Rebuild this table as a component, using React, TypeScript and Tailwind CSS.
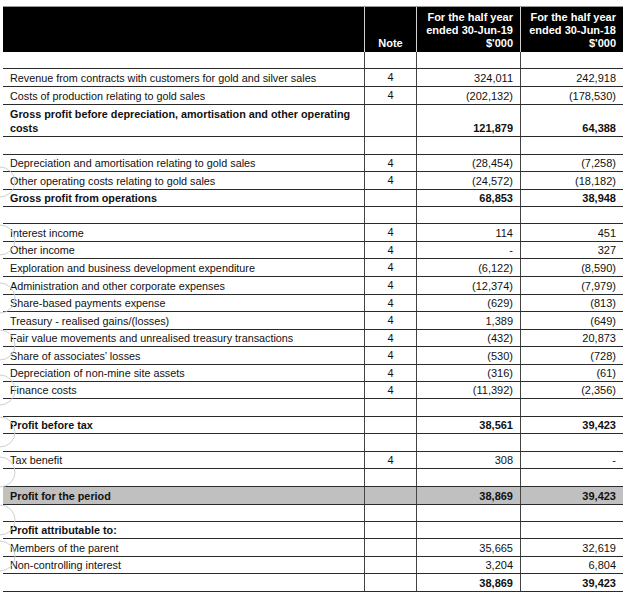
import React from "react";

type Row = {
  label?: string;
  note?: string;
  v1?: string;
  v2?: string;
  bold?: boolean;
  boldValues?: boolean;
  h: number;
  shaded?: boolean;
};

const rows: Row[] = [
  { h: 17 },
  { label: "Revenue from contracts with customers for gold and silver sales", note: "4", v1: "324,011", v2: "242,918", h: 18 },
  { label: "Costs of production relating to gold sales", note: "4", v1: "(202,132)", v2: "(178,530)", h: 18 },
  { label: "Gross profit before depreciation, amortisation and other operating costs", v1: "121,879", v2: "64,388", bold: true, h: 32 },
  { h: 18 },
  { label: "Depreciation and amortisation relating to gold sales", note: "4", v1: "(28,454)", v2: "(7,258)", h: 17 },
  { label: "Other operating costs relating to gold sales", note: "4", v1: "(24,572)", v2: "(18,182)", h: 18 },
  { label: "Gross profit from operations", v1: "68,853", v2: "38,948", bold: true, h: 17 },
  { h: 17 },
  { label: "Interest income", note: "4", v1: "114", v2: "451", h: 18 },
  { label: "Other income", note: "4", v1: "-", v2: "327", h: 17 },
  { label: "Exploration and business development expenditure", note: "4", v1: "(6,122)", v2: "(8,590)", h: 18 },
  { label: "Administration and other corporate expenses", note: "4", v1: "(12,374)", v2: "(7,979)", h: 18 },
  { label: "Share-based payments expense", note: "4", v1: "(629)", v2: "(813)", h: 17 },
  { label: "Treasury - realised gains/(losses)", note: "4", v1: "1,389", v2: "(649)", h: 18 },
  { label: "Fair value movements and unrealised treasury transactions", note: "4", v1: "(432)", v2: "20,873", h: 17 },
  { label: "Share of associates\u2019 losses", note: "4", v1: "(530)", v2: "(728)", h: 18 },
  { label: "Depreciation of non-mine site assets", note: "4", v1: "(316)", v2: "(61)", h: 17 },
  { label: "Finance costs", note: "4", v1: "(11,392)", v2: "(2,356)", h: 17 },
  { h: 18 },
  { label: "Profit before tax", v1: "38,561", v2: "39,423", bold: true, h: 17 },
  { h: 18 },
  { label: "Tax benefit", note: "4", v1: "308", v2: "-", h: 17 },
  { h: 18 },
  { label: "Profit for the period", v1: "38,869", v2: "39,423", bold: true, shaded: true, h: 18 },
  { h: 17 },
  { label: "Profit attributable to:", bold: true, h: 17 },
  { label: "Members of the parent", v1: "35,665", v2: "32,619", h: 18 },
  { label: "Non-controlling interest", v1: "3,204", v2: "6,804", h: 17 },
  { v1: "38,869", v2: "39,423", boldValues: true, h: 18 },
];

const grid = "grid grid-cols-[361px_52px_104px_103px]";

// faint stamp arcs bleeding in from the scan's left margin
function Watermark() {
  const ys = [182, 240, 298, 345, 390, 432, 472, 520, 556];
  return (
    <svg className="pointer-events-none absolute left-0 top-0" width="30" height="598">
      {ys.map((y) => (
        <circle key={y} cx="0" cy={y} r="15" fill="none" stroke="#cfcfcf" strokeWidth="1" />
      ))}
    </svg>
  );
}

export default function App() {
  return (
    <div className="relative h-[598px] w-[640px] overflow-hidden bg-white pl-[3px] pt-[6px] font-['Liberation_Sans',Arial,sans-serif] text-[11px] text-[#111]">
      <div className="w-[620px] border-t border-[#999]">
        {/* header */}
        <div className={`${grid} h-[45px] bg-black font-bold leading-[13px] text-white`}>
          <div />
          <div className="flex items-end justify-center border-l border-[#d0d0d0] pb-[2px]">Note</div>
          <div className="flex flex-col items-end justify-end border-l border-[#d0d0d0] pb-[2px] pr-[7px] text-right">
            <span>For the half year</span>
            <span>ended 30-Jun-19</span>
            <span>$'000</span>
          </div>
          <div className="flex flex-col items-end justify-end border-l border-[#d0d0d0] pb-[2px] pr-[7px] text-right">
            <span>For the half year</span>
            <span>ended 30-Jun-18</span>
            <span>$'000</span>
          </div>
        </div>

        {rows.map((r, i) => {
          const rowBold = r.bold ? "font-bold" : "";
          const valBold = r.bold || r.boldValues ? "font-bold" : "";
          return (
            <div
              key={i}
              className={`${grid} border-b border-[#2b2b2b] leading-[14px] ${r.shaded ? "bg-[#c0c0c0]" : ""}`}
              style={{ height: r.h }}
            >
              <div className={`flex items-center pl-[7px] text-[10.8px] ${rowBold}`}>
                <span className={r.h > 20 ? "w-[352px]" : "whitespace-nowrap"}>{r.label}</span>
              </div>
              <div className="flex justify-center border-l border-[#444] pt-[1px]">{r.note}</div>
              <div className={`flex items-end justify-end border-l border-[#444] pb-[1px] pr-[7px] ${valBold}`}>
                {r.v1}
              </div>
              <div className={`flex items-end justify-end border-l border-[#444] pb-[1px] pr-[7px] ${valBold}`}>
                {r.v2}
              </div>
            </div>
          );
        })}
      </div>
      <Watermark />
    </div>
  );
}
